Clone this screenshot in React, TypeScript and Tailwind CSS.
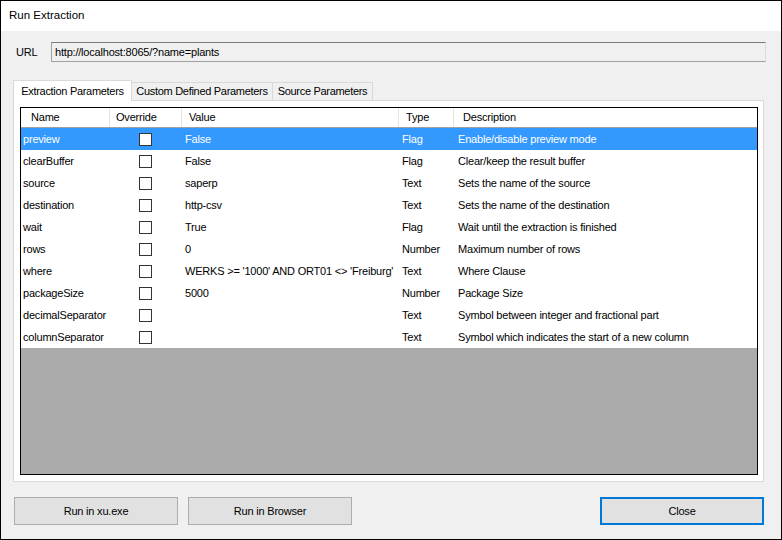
import type { ReactNode } from 'react';

type Param = {
  name: string;
  value: string;
  type: string;
  description: string;
};

const params: Param[] = [
  { name: 'preview', value: 'False', type: 'Flag', description: 'Enable/disable preview mode' },
  { name: 'clearBuffer', value: 'False', type: 'Flag', description: 'Clear/keep the result buffer' },
  { name: 'source', value: 'saperp', type: 'Text', description: 'Sets the name of the source' },
  { name: 'destination', value: 'http-csv', type: 'Text', description: 'Sets the name of the destination' },
  { name: 'wait', value: 'True', type: 'Flag', description: 'Wait until the extraction is finished' },
  { name: 'rows', value: '0', type: 'Number', description: 'Maximum number of rows' },
  { name: 'where', value: "WERKS >= '1000' AND ORT01 <> 'Freiburg'", type: 'Text', description: 'Where Clause' },
  { name: 'packageSize', value: '5000', type: 'Number', description: 'Package Size' },
  { name: 'decimalSeparator', value: '', type: 'Text', description: 'Symbol between integer and fractional part' },
  { name: 'columnSeparator', value: '', type: 'Text', description: 'Symbol which indicates the start of a new column' },
];

function HeaderCell({ width, pad, children }: { width: string; pad: string; children: ReactNode }) {
  return (
    <div className={`${width} ${pad} flex h-full shrink-0 items-center border-r border-[#e5e5e5]`}>
      {children}
    </div>
  );
}

function Checkbox() {
  return <span className="block h-[13px] w-[13px] border border-[#333333] bg-white" />;
}

function ParamRow({ p, selected }: { p: Param; selected?: boolean }) {
  return (
    <div
      className={`flex h-[22px] items-center ${selected ? 'bg-[#3399ff] text-white' : 'bg-white text-black'}`}
    >
      <div className="w-[89px] shrink-0 truncate pl-[2px]">{p.name}</div>
      <div className="flex w-[72px] shrink-0 justify-center pr-[1px]">
        <Checkbox />
      </div>
      <div className="w-[217px] shrink-0 truncate pl-[3px]">{p.value}</div>
      <div className="w-[55px] shrink-0 pl-[3px]">{p.type}</div>
      <div className="min-w-0 flex-1 truncate pl-[4px]">{p.description}</div>
    </div>
  );
}

function Button({ label, focused }: { label: string; focused?: boolean }) {
  return (
    <button
      className={`h-[28px] w-[164px] bg-[#e1e1e1] text-black ${
        focused ? 'border-2 border-[#0078d7]' : 'border border-[#adadad]'
      }`}
    >
      {label}
    </button>
  );
}

export default function App() {
  return (
    <div
      className="flex h-[540px] w-[782px] flex-col border border-black bg-[#f0f0f0] text-[11px] tracking-[-0.2px] text-black"
      style={{ fontFamily: '"Liberation Sans", Arial, sans-serif' }}
    >
      <div className="flex h-[30px] shrink-0 items-center bg-white pl-[8px] text-[11.5px] tracking-normal">
        Run Extraction
      </div>

      <div className="flex flex-1 flex-col px-[12px] pt-[11px]">
        <div className="flex h-[20px] items-center">
          <span className="w-[38px] pl-[3px]">URL</span>
          <div className="flex h-[20px] w-[715px] items-center border border-[#a0a0a0] border-t-[#7a7a7a] border-r-[#dcdcdc] bg-[#f0f0f0] pl-[3px]">
            http://localhost:8065/?name=plants
          </div>
        </div>

        <div className="mt-[18px] flex h-[20px] items-end tracking-[-0.3px]">
          <div className="relative z-10 -mb-px flex h-[21px] w-[119px] items-center justify-center border border-b-0 border-[#d9d9d9] bg-white">
            Extraction Parameters
          </div>
          <div className="flex h-[18px] w-[141px] items-center justify-center border border-b-0 border-l-0 border-[#d9d9d9]">
            Custom Defined Parameters
          </div>
          <div className="flex h-[18px] w-[100px] items-center justify-center border border-b-0 border-l-0 border-[#d9d9d9]">
            Source Parameters
          </div>
        </div>

        <div className="flex h-[382px] w-[751px] flex-col border border-[#d9d9d9] bg-white p-[6px] pr-[5px]">
          <div className="flex flex-1 flex-col border border-black bg-[#ababab]">
            <div className="flex h-[20px] shrink-0 items-center border-b border-[#a0a0a0] bg-white">
              <HeaderCell width="w-[89px]" pad="pl-[10px]">Name</HeaderCell>
              <HeaderCell width="w-[72px]" pad="pl-[6px]">Override</HeaderCell>
              <HeaderCell width="w-[217px]" pad="pl-[7px]">Value</HeaderCell>
              <HeaderCell width="w-[55px]" pad="pl-[7px]">Type</HeaderCell>
              <div className="flex h-full flex-1 items-center pl-[9px]">Description</div>
            </div>
            {params.map((p, i) => (
              <ParamRow key={p.name} p={p} selected={i === 0} />
            ))}
          </div>
        </div>

        <div className="mt-[15px] flex items-center">
          <div className="ml-[1px] flex gap-[10px]">
            <Button label="Run in xu.exe" />
            <Button label="Run in Browser" />
          </div>
          <div className="ml-auto mr-[5px]">
            <Button label="Close" focused />
          </div>
        </div>
      </div>
    </div>
  );
}
